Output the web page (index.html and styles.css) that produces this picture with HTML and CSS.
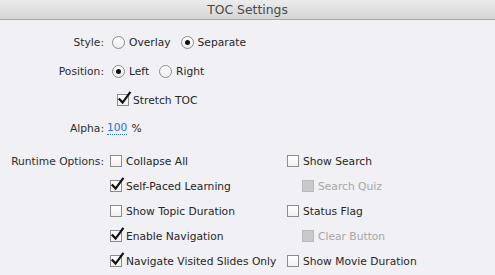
FILE: index.html
```html
<!DOCTYPE html>
<html>
<head>
<meta charset="utf-8">
<link rel="stylesheet" href="styles.css">
</head>
<body>
<div class="window">
  <div class="titlebar">TOC Settings</div>
  <div class="content">
    <div class="row r1">
      <div class="label">Style:</div>
      <div class="controls">
        <span class="opt"><span class="radio"></span>Overlay</span>
        <span class="opt"><span class="radio on"></span>Separate</span>
      </div>
    </div>
    <div class="row r2">
      <div class="label">Position:</div>
      <div class="controls">
        <span class="opt"><span class="radio on"></span>Left</span>
        <span class="opt"><span class="radio"></span>Right</span>
      </div>
    </div>
    <div class="row r3">
      <div class="label"></div>
      <div class="controls indent">
        <span class="opt"><span class="check on"><svg viewBox="0 0 14 14"><path d="M2.5 7.2 L5.6 10.6 L12.8 0.8"/></svg></span>Stretch TOC</span>
      </div>
    </div>
    <div class="row r4">
      <div class="label">Alpha:</div>
      <div class="controls alpha">
        <span class="num">100</span><span class="pct">%</span>
      </div>
    </div>
    <div class="runtime">
      <div class="label">Runtime Options:</div>
      <span class="opt"><span class="check"></span>Collapse All</span>
      <span class="opt"><span class="check"></span>Show Search</span>

      <div class="label"></div>
      <span class="opt"><span class="check on"><svg viewBox="0 0 14 14"><path d="M2.5 7.2 L5.6 10.6 L12.8 0.8"/></svg></span>Self-Paced Learning</span>
      <span class="opt sub disabled"><span class="check"></span>Search Quiz</span>

      <div class="label"></div>
      <span class="opt"><span class="check"></span>Show Topic Duration</span>
      <span class="opt"><span class="check"></span>Status Flag</span>

      <div class="label"></div>
      <span class="opt"><span class="check on"><svg viewBox="0 0 14 14"><path d="M2.5 7.2 L5.6 10.6 L12.8 0.8"/></svg></span>Enable Navigation</span>
      <span class="opt sub disabled"><span class="check"></span>Clear Button</span>

      <div class="label"></div>
      <span class="opt"><span class="check on"><svg viewBox="0 0 14 14"><path d="M2.5 7.2 L5.6 10.6 L12.8 0.8"/></svg></span>Navigate Visited Slides Only</span>
      <span class="opt"><span class="check"></span>Show Movie Duration</span>
    </div>
  </div>
</div>
</body>
</html>
```
FILE: styles.css
```css
* { box-sizing: border-box; }
html, body {
  margin: 0;
  padding: 0;
  background: #f0f0f5;
}
body {
  width: 495px;
  height: 275px;
  overflow: hidden;
  font-family: "DejaVu Sans", "Noto Sans", sans-serif;
  font-size: 10.7px;
  color: #262626;
}
.titlebar {
  height: 20px;
  border-bottom: 1px solid #a8a8a8;
  background: linear-gradient(#ececec, #d5d5d5);
  text-align: center;
  font-size: 12.4px;
  line-height: 19px;
  color: #4a4a4a;
}
.content {
  display: flex;
  flex-direction: column;
}
.row {
  display: flex;
  align-items: center;
  height: 20px;
}
.r1 { margin-top: 12px; }
.r2 { margin-top: 9px; }
.r3 { margin-top: 9px; }
.r4 { margin-top: 8px; }
.label {
  width: 104px;
  text-align: right;
  color: #2e2e2e;
}
.controls {
  display: flex;
  align-items: center;
  gap: 10px;
  padding-left: 8px;
}
.controls.indent { padding-left: 13px; }
.controls.alpha { padding-left: 3px; gap: 4px; }
.opt {
  display: inline-flex;
  align-items: center;
  white-space: nowrap;
}
.radio {
  width: 13px;
  height: 13px;
  border-radius: 50%;
  border: 1px solid #8c8c8c;
  background: linear-gradient(#ffffff, #ececec);
  margin-right: 4px;
  display: inline-flex;
  align-items: center;
  justify-content: center;
}
.radio.on::after {
  content: "";
  width: 5px;
  height: 5px;
  border-radius: 50%;
  background: #111;
}
.check {
  position: relative;
  width: 12px;
  height: 12px;
  border: 1px solid #8c8c8c;
  background: linear-gradient(#ffffff, #f0f0f0);
  margin-right: 4px;
}
.check svg {
  position: absolute;
  left: -1px;
  top: -3px;
  width: 14px;
  height: 14px;
  overflow: visible;
}
.check svg path {
  fill: none;
  stroke: #111;
  stroke-width: 2.2;
  stroke-linecap: square;
}
.num {
  color: #2a6fc8;
  border-bottom: 1px dotted #2a6fc8;
  line-height: 13px;
}
.runtime {
  margin-top: 13px;
  display: grid;
  grid-template-columns: 104px 177px 1fr;
  grid-auto-rows: 20px;
  row-gap: 5px;
  align-items: center;
}
.runtime .opt:nth-child(3n+2) { padding-left: 6px; }
.runtime .opt:nth-child(3n) { padding-left: 6px; }
.runtime .opt.sub { padding-left: 21px; }
.disabled { color: #a6a6a6; }
.disabled .check {
  background: #c9c9c9;
  border-color: #b9b9b9;
}
```
